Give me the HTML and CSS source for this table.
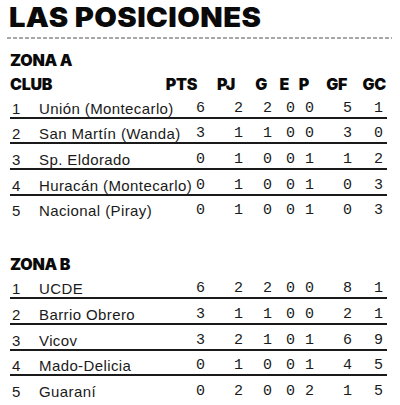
FILE: index.html
```html
<!DOCTYPE html>
<html lang="es">
<head>
<meta charset="utf-8">
<link rel="stylesheet" href="styles.css">
</head>
<body>
<div class="page">
  <h1 class="title">LAS POSICIONES</h1>
  <div class="dash"></div>

  <section class="zone">
    <h2 class="zone-name">ZONA A</h2>
    <div class="head">
      <span class="h-club">CLUB</span>
      <span>PTS</span><span>PJ</span><span>G</span><span>E</span><span>P</span><span>GF</span><span>GC</span>
    </div>
    <div class="row"><span class="pos">1</span><span class="club">Unión (Montecarlo)</span><span>6</span><span>2</span><span>2</span><span>0</span><span>0</span><span>5</span><span>1</span></div>
    <div class="row"><span class="pos">2</span><span class="club">San Martín (Wanda)</span><span>3</span><span>1</span><span>1</span><span>0</span><span>0</span><span>3</span><span>0</span></div>
    <div class="row"><span class="pos">3</span><span class="club">Sp. Eldorado</span><span>0</span><span>1</span><span>0</span><span>0</span><span>1</span><span>1</span><span>2</span></div>
    <div class="row"><span class="pos">4</span><span class="club">Huracán (Montecarlo)</span><span>0</span><span>1</span><span>0</span><span>0</span><span>1</span><span>0</span><span>3</span></div>
    <div class="row last"><span class="pos">5</span><span class="club">Nacional (Piray)</span><span>0</span><span>1</span><span>0</span><span>0</span><span>1</span><span>0</span><span>3</span></div>
  </section>

  <section class="zone zone-b">
    <h2 class="zone-name">ZONA B</h2>
    <div class="row"><span class="pos">1</span><span class="club">UCDE</span><span>6</span><span>2</span><span>2</span><span>0</span><span>0</span><span>8</span><span>1</span></div>
    <div class="row"><span class="pos">2</span><span class="club">Barrio Obrero</span><span>3</span><span>1</span><span>1</span><span>0</span><span>0</span><span>2</span><span>1</span></div>
    <div class="row"><span class="pos">3</span><span class="club">Vicov</span><span>3</span><span>2</span><span>1</span><span>0</span><span>1</span><span>6</span><span>9</span></div>
    <div class="row"><span class="pos">4</span><span class="club">Mado-Delicia</span><span>0</span><span>1</span><span>0</span><span>0</span><span>1</span><span>4</span><span>5</span></div>
    <div class="row last"><span class="pos">5</span><span class="club">Guaraní</span><span>0</span><span>2</span><span>0</span><span>0</span><span>2</span><span>1</span><span>5</span></div>
  </section>
</div>
</body>
</html>
```

FILE: styles.css
```css
html, body {
  margin: 0;
  padding: 0;
  background: #ffffff;
}

.page {
  width: 400px;
  height: 405px;
  overflow: hidden;
  color: #111111;
}

.title {
  margin: 0;
  padding: 2px 0 0 9px;
  font-family: Inter, Lato, "Liberation Sans", sans-serif;
  font-weight: 900;
  font-size: 27px;
  line-height: 31px;
  letter-spacing: 0.4px;
  color: #0a0a0a;
  transform: scaleX(1.08);
  transform-origin: 10px 0;
}

.dash {
  margin: 4px 8px 0 7px;
  height: 2px;
  background: repeating-linear-gradient(90deg, #a8a8a8 0 4px, transparent 4px 6px);
}

.zone {
  margin-left: 10px;
  width: 377px;
}

.zone-name {
  margin: 12px 0 0 0;
  font-family: Inter, Lato, "Liberation Sans", sans-serif;
  font-weight: 900;
  font-size: 16px;
  line-height: 18px;
  letter-spacing: -0.3px;
  color: #0a0a0a;
}

.zone-b .zone-name {
  margin-top: 34px;
}

.head {
  display: grid;
  grid-template-columns: 1fr 40px 38px 32px 22px 20px 38px 39px;
  margin-top: 6px;
  padding-right: 1px;
  font-family: Inter, Lato, "Liberation Sans", sans-serif;
  font-weight: 900;
  font-size: 16px;
  line-height: 18px;
  letter-spacing: -0.3px;
  color: #0a0a0a;
}

.head span {
  text-align: right;
}

.head .h-club {
  text-align: left;
}

.row {
  display: grid;
  grid-template-columns: 29px 150px 16px 38px 29px 23px 19px 38px 31px;
  padding: 7.7px 4px 0 0;
  line-height: 16px;
  height: 16px;
  border-bottom: 2px solid #1a1a1a;
  font-family: "Liberation Mono", "DejaVu Sans Mono", monospace;
  font-size: 15px;
  color: #1a1a1a;
}

.row.last {
  border-bottom-color: transparent;
}

.row span {
  text-align: right;
}

.row .pos,
.row .club {
  text-align: left;
  font-family: "Liberation Sans", Arial, sans-serif;
  font-size: 15px;
  letter-spacing: 0.4px;
  white-space: nowrap;
}

.row .pos {
  padding-left: 2px;
}
```
